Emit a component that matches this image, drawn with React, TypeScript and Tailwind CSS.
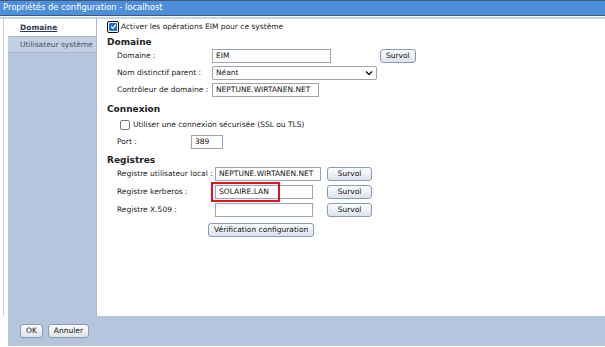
import React from 'react'

const font = { fontFamily: '"DejaVu Sans", Verdana, sans-serif' }

function Btn({ children, className = '' }: { children: React.ReactNode; className?: string }) {
  return (
    <button
      className={`h-[14px] px-[5px] rounded-[3px] border border-[#8d9bb0] bg-gradient-to-b from-[#fbfcfe] to-[#dde3ec] text-[7.5px] leading-none text-[#111] ${className}`}
    >
      {children}
    </button>
  )
}

function Field({ value = '', className = '' }: { value?: string; className?: string }) {
  return (
    <div
      className={`h-[14px] border border-[#9ea4ad] bg-white px-[3px] text-[7.5px] leading-[12px] text-[#111] ${className}`}
    >
      {value}
    </div>
  )
}

function Check({ checked }: { checked?: boolean }) {
  if (checked)
    return (
      <span className="flex h-[12px] w-[12px] items-center justify-center rounded-[2px] border-[1.5px] border-[#111] bg-white">
        <span className="flex h-[8px] w-[8px] items-center justify-center rounded-[1px] bg-[#1f6fd8]">
          <svg width="7" height="7" viewBox="0 0 8 8">
            <path d="M1.3 4.2 L3.2 6 L6.8 1.8" stroke="white" strokeWidth="1.4" fill="none" />
          </svg>
        </span>
      </span>
    )
  return <span className="h-[10px] w-[10px] rounded-[2px] border border-[#777] bg-white" />
}

export default function App() {
  return (
    <div className="relative h-[347px] w-[605px] overflow-hidden bg-white text-[#222]" style={font}>
      <div className="h-[16px] border-y-[1.5px] border-[#3f5a78] bg-[#4d8fd8] pl-[3px] text-[8.4px] leading-[13px] text-white">
        Propriétés de configuration - localhost
      </div>
      <div className="h-[2px] bg-[#c5d5ea] mt-[1px]" />

      <div className="flex h-[297px] pl-[3px]">
        <div className="w-[5px] border-l border-[#d0d0d0]" />
        <div className="flex w-[89px] flex-col border-r border-[#a9b8cf] bg-[#b5c5de]">
          <div className="flex h-[17px] items-center bg-white pl-[12px] text-[7.5px] font-bold text-[#2b3a55] underline">
            Domaine
          </div>
          <div className="flex h-[17px] items-center border-y border-[#a9b8cf] bg-[#c3cfe2] pl-[12px] text-[7.5px] text-[#4b5568]">
            Utilisateur système
          </div>
        </div>

        <div className="flex-1 pl-[10px] pt-[1px] text-[7.5px]">
          <div className="flex h-[13px] items-center gap-[2px]">
            <Check checked />
            <span>Activer les opérations EIM pour ce système</span>
          </div>

          <div className="mt-[4px] text-[9px] font-bold leading-[10px]">Domaine</div>
          <div className="flex h-[17px] items-center pl-[10px]">
            <span className="w-[95px]">Domaine :</span>
            <Field value="EIM" className="w-[119px]" />
            <Btn className="ml-[49px]">Survol</Btn>
          </div>
          <div className="flex h-[17px] items-center pl-[10px]">
            <span className="w-[95px]">Nom distinctif parent :</span>
            <div className="flex h-[14px] w-[165px] items-center justify-between rounded-[2px] border border-[#9ea4ad] bg-white px-[3px] text-[7.5px]">
              <span>Néant</span>
              <svg width="8" height="6" viewBox="0 0 8 6">
                <path d="M1 1.5 L4 4.5 L7 1.5" stroke="#111" strokeWidth="1.4" fill="none" />
              </svg>
            </div>
          </div>
          <div className="flex h-[17px] items-center pl-[10px]">
            <span className="w-[95px]">Contrôleur de domaine :</span>
            <Field value="NEPTUNE.WIRTANEN.NET" className="w-[107px]" />
          </div>

          <div className="mt-[6px] text-[9px] font-bold leading-[10px]">Connexion</div>
          <div className="mt-[3px] flex h-[16px] items-center gap-[3px] pl-[13px]">
            <Check />
            <span>Utiliser une connexion sécurisée (SSL ou TLS)</span>
          </div>
          <div className="flex h-[17px] items-center pl-[10px]">
            <span className="w-[74px]">Port :</span>
            <Field value="389" className="w-[32px]" />
          </div>

          <div className="mt-[6px] text-[9px] font-bold leading-[9px]">Registres</div>
          <div className="flex h-[18px] items-center pl-[10px]">
            <span className="w-[98px]">Registre utilisateur local :</span>
            <Field value="NEPTUNE.WIRTANEN.NET" className="w-[106px]" />
            <Btn className="ml-[6px] w-[45px]">Survol</Btn>
          </div>
          <div className="flex h-[18px] items-center pl-[10px]">
            <span className="w-[98px]">Registre kerberos :</span>
            <div className="relative">
              <Field value="SOLAIRE.LAN" className="w-[98px]" />
              <div className="absolute left-[-4px] top-[-3px] h-[20px] w-[69px] border-[2px] border-[#e0131a]" />
            </div>
            <Btn className="ml-[14px] w-[45px]">Survol</Btn>
          </div>
          <div className="flex h-[18px] items-center pl-[10px]">
            <span className="w-[98px]">Registre X.509 :</span>
            <Field className="w-[98px]" />
            <Btn className="ml-[14px] w-[45px]">Survol</Btn>
          </div>
          <div className="mt-[4px] pl-[101px]">
            <Btn>Vérification configuration</Btn>
          </div>
        </div>
      </div>

      <div className="flex h-[30px] items-center gap-[5px] bg-[#b5c5de] ml-[8px] pl-[12px]">
        <Btn>OK</Btn>
        <Btn>Annuler</Btn>
      </div>
    </div>
  )
}
